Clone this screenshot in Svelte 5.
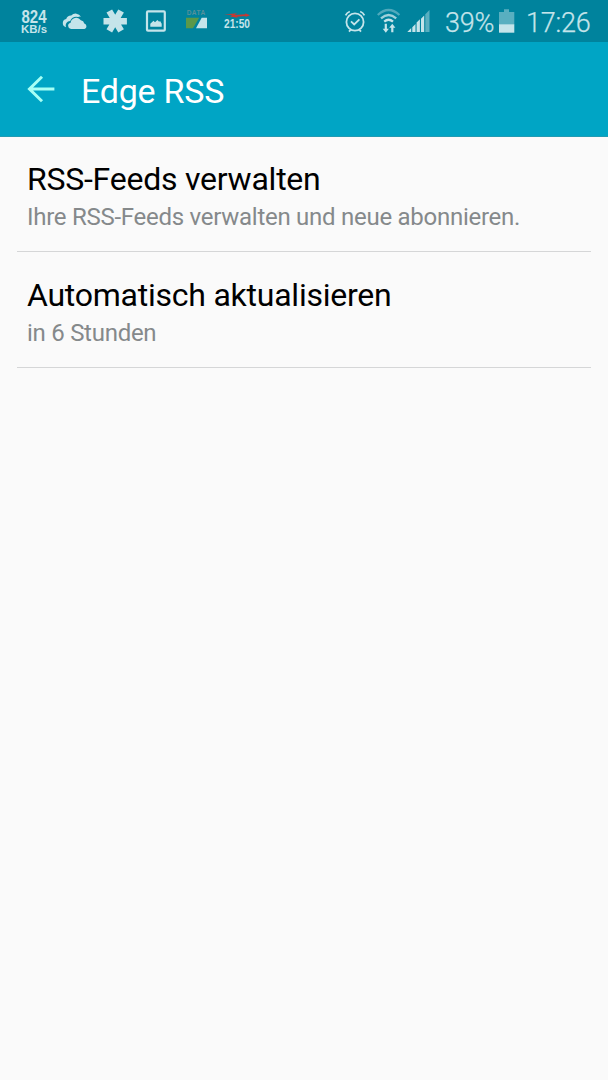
<script lang="ts">
  interface Preference {
    title: string;
    summary: string;
  }

  const battery = 39;
  const time = '17:26';

  const preferences: Preference[] = [
    { title: 'RSS-Feeds verwalten', summary: 'Ihre RSS-Feeds verwalten und neue abonnieren.' },
    { title: 'Automatisch aktualisieren', summary: 'in 6 Stunden' },
  ];
</script>

<div class="screen">
  <div class="status-bar">
    <div class="notifications">
      <svg width="28" height="42" viewBox="20 0 28 42" class="condensed">
        <text x="21.5" y="23" font-size="18.5" font-weight="700" textLength="25" lengthAdjust="spacingAndGlyphs">824</text>
        <text x="21" y="33.4" font-size="11" font-weight="700" textLength="26" lengthAdjust="spacingAndGlyphs">KB/s</text>
      </svg>
      <svg width="28" height="42" viewBox="61 0 28 42">
        <path d="M66 27.2a4.2 4.2 0 0 1 .2-8.2 5 5 0 0 1 5-3.5 6.2 6.2 0 0 1 9.8 1.2 6.5 6.5 0 0 0-3 .2 7 7 0 0 0-7.8 4 4.5 4.5 0 0 0-4.2 6.3z" />
        <path d="M71 29a3.2 3.2 0 0 1-.4-6.3 5.6 5.6 0 0 1 10.2-2.5 4.3 4.3 0 0 1 3.5 3.4 2.8 2.8 0 0 1 .2 5.4z" />
      </svg>
      <svg width="26" height="42" viewBox="102 0 26 42">
        <path d="M103.5 18h23.4v6.4h-23.4zM106.5 12.6l5.6-3.2 11.8 19.8-5.6 3.2zM118.3 9.4l5.6 3.2L112.1 32.4l-5.6-3.2z" />
      </svg>
      <svg width="24" height="42" viewBox="144 0 24 42">
        <rect x="147" y="11.4" width="17.8" height="19.3" rx="1" fill="none" stroke="#c5e4ea" stroke-width="2.2" />
        <path d="M150.3 26.7v-2.9l3.2-3 1.5 1.4 2.4-2.2 1.7 1.8 1-.8 1.6 2.8v2.9z" />
      </svg>
      <svg width="24" height="42" viewBox="184 0 24 42" class="condensed">
        <text x="186.7" y="15" font-size="6.5" font-weight="700" fill="#57909a" textLength="18.5">DATA</text>
        <path d="M186 17.8h13.2L193 28.3h-7z" fill="#5b9849" />
        <path d="M201.7 17.8h5.3v10.5h-11z" />
      </svg>
      <svg width="28" height="42" viewBox="223 0 28 42" class="condensed">
        <path d="M224 14.6l13.2-1.3-2.6 1.7 10.8-.7-.2-1 4.8 2-4.5 1.8.1-1.1-8.8.8 1.2 1-8-1.4 2.4-1.4z" fill="#c73832" />
        <text x="224" y="27.5" font-size="12.5" font-weight="700" textLength="26" lengthAdjust="spacingAndGlyphs">21:50</text>
      </svg>
    </div>

    <div class="system">
      <svg width="22" height="42" viewBox="344 0 22 42">
        <g fill="none" stroke="#c5e4ea" stroke-width="1.8">
          <circle cx="355" cy="22" r="8.6" />
          <path d="M345.6 15.3q1.3-2.7 4.2-3.8M364.4 15.3q-1.3-2.7-4.2-3.8M351 21.3l3.2 3.2 5.2-5.2M351 29.4l-2 2.3M359 29.4l2 2.3" />
        </g>
      </svg>
      <svg width="24" height="42" viewBox="377 0 24 42">
        <g fill="none" stroke="#c5e4ea" stroke-width="2.3">
          <path d="M377.8 15q10.8-10 21.6 0" opacity="0.4" />
          <path d="M381 18.3q7.6-6.6 15.2 0" opacity="0.8" />
          <path d="M384.2 21.7q4.4-3.8 8.8 0" />
        </g>
        <path d="M384.7 23.7h2.2v5h2l-3.1 4-3.1-4h2zM391.2 32.3h2.2v-4.6h2l-3.1-4-3.1 4h2z" />
      </svg>
      <svg width="24" height="42" viewBox="407 0 24 42">
        <path d="M407.3 32l3.9-3.9V32zM412.3 27.2l3.2-3.2v8h-3.2zM416.6 22.6l3.3-3.3V32h-3.3zM421 18.7l3.2-3.2V32H421z" />
        <path d="M425.3 14.3l4.2-4.2V32h-4.2z" opacity="0.45" />
      </svg>
      <span class="battery-level">{battery}%</span>
      <svg width="16" height="42" viewBox="499 0 16 42">
        <path d="M499 12h5V9.2h5V12h5.3v12.2H499z" opacity="0.45" />
        <path d="M499 24.2h15.3v8.5H499z" />
      </svg>
      <span class="clock">{time}</span>
    </div>
  </div>

  <header>
    <button aria-label="Back">
      <svg width="28" height="28" viewBox="0 0 28 28">
        <path d="M15 1.8L2.5 14 15 26.2M2.5 14H27.4" fill="none" stroke="#a7fff5" stroke-width="3" />
      </svg>
    </button>
    <h1>Edge RSS</h1>
  </header>

  <ul>
    {#each preferences as pref}
      <li>
        <div class="title">{pref.title}</div>
        <div class="summary">{pref.summary}</div>
      </li>
    {/each}
  </ul>
</div>

<style>
  :global(body) {
    margin: 0;
    background: #fafafa;
  }

  .screen {
    min-height: 1080px;
    background: #fafafa;
    font-family: Roboto, sans-serif;
  }

  svg {
    display: block;
    flex-shrink: 0;
    overflow: visible;
    fill: #c5e4ea;
  }

  .condensed {
    font-family: 'Liberation Sans', Roboto, sans-serif;
  }

  .status-bar {
    display: flex;
    justify-content: space-between;
    height: 42px;
    padding: 0 17px 0 20px;
    box-sizing: border-box;
    background: #00839d;
  }

  .notifications,
  .system {
    display: flex;
    align-items: center;
  }

  .notifications {
    gap: 13px;
  }

  .notifications svg:nth-child(4),
  .notifications svg:nth-child(5) {
    margin-left: 3px;
  }

  .notifications svg:nth-child(6) {
    margin-left: 2px;
  }

  .system svg:nth-child(2) {
    margin: 0 6px 0 11px;
  }

  .battery-level,
  .clock {
    color: #c5e4ea;
    font-size: 27px;
    font-weight: 300;
    line-height: 40px;
    padding-top: 3px;
    letter-spacing: -0.2px;
    white-space: nowrap;
    -webkit-text-stroke: 0.25px #c5e4ea;
  }

  .battery-level {
    width: 54px;
    margin-left: 14px;
  }

  .clock {
    width: 65px;
    margin-left: 11px;
  }

  header {
    display: flex;
    align-items: center;
    height: 95px;
    padding-left: 27px;
    box-sizing: border-box;
    background: #00a5c5;
    border-bottom: 1px solid #229bb2;
  }

  button {
    padding: 0;
    border: 0;
    background: none;
  }

  h1 {
    margin: 4px 0 0 26px;
    color: #fff;
    font-size: 34px;
    font-weight: 400;
    line-height: 40px;
    letter-spacing: -0.25px;
  }

  ul {
    margin: 0;
    padding: 0 17px;
    list-style: none;
  }

  li {
    height: 115px;
    padding: 22px 10px 0;
    box-sizing: border-box;
    border-bottom: 1px solid #d5d6d7;
  }

  li + li {
    height: 116px;
    padding-top: 23px;
  }

  .title {
    color: #000;
    font-size: 32px;
    line-height: 40px;
    letter-spacing: -0.24px;
  }

  .summary {
    padding-top: 1px;
    color: #85898b;
    font-size: 24px;
    line-height: 34px;
    letter-spacing: -0.27px;
  }
</style>
